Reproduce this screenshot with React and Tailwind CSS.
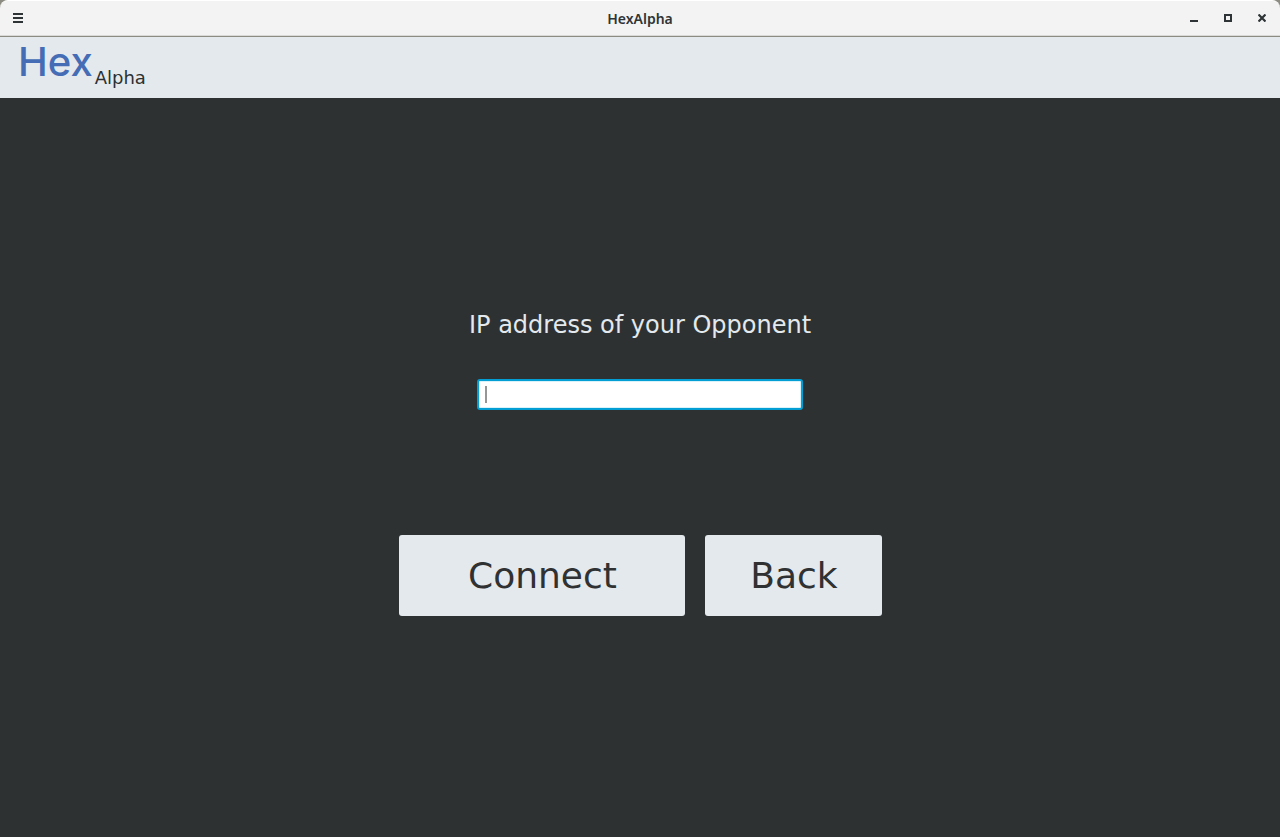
import React from "react";

function TitleBar() {
  return (
    <div className="bg-[#8d8c82]">
      <header className="grid h-9 grid-cols-[1fr_auto_1fr] items-center rounded-t-lg border-t border-b border-t-white border-b-[#d9d9d7] bg-[#f3f3f3] px-2 text-[#2e3436]">
        <button type="button" aria-label="Menu" className="flex size-5 items-center justify-center">
          <svg width="10" height="10" viewBox="0 0 10 10" fill="currentColor" shapeRendering="crispEdges">
            <path d="M0 0h10v2H0zM0 4h10v2H0zM0 8h10v2H0z" />
          </svg>
        </button>
        <h1 className="pt-0.5 font-['Noto_Sans','Open_Sans',sans-serif] text-sm font-semibold">HexAlpha</h1>
        <div className="flex justify-end gap-[14px]">
          <button type="button" aria-label="Minimize" className="flex size-5 items-center justify-center">
            <svg width="8" height="8" viewBox="0 0 8 8" fill="currentColor" shapeRendering="crispEdges">
              <path d="M0 6h8v2H0z" />
            </svg>
          </button>
          <button type="button" aria-label="Maximize" className="flex size-5 items-center justify-center">
            <svg width="8" height="8" viewBox="0 0 8 8" fill="currentColor" fillRule="evenodd" shapeRendering="crispEdges">
              <path d="M0 0h8v8H0zM2 2v4h4V2z" />
            </svg>
          </button>
          <button type="button" aria-label="Close" className="flex size-5 items-center justify-center">
            <svg width="8" height="8" viewBox="0 0 8 8" fill="none" stroke="currentColor" strokeWidth="2.2">
              <path d="M.5.5l7 7M7.5.5l-7 7" />
            </svg>
          </button>
        </div>
      </header>
      <div className="h-px bg-[#8d8c82]" />
    </div>
  );
}

function Logo() {
  return (
    <div className="flex h-[61px] items-start gap-0.5 bg-[#e4e9ed] px-[18px]">
      <span className="font-[Inter,sans-serif] text-[40px] leading-[50px] font-medium text-[#446db6]">Hex</span>
      <span className="pt-[29px] text-lg leading-6 text-[#2d3132]">Alpha</span>
    </div>
  );
}

export default function App() {
  return (
    <div className="flex min-h-screen flex-col bg-[#2d3132] font-['DejaVu_Sans',sans-serif]">
      <TitleBar />
      <Logo />
      <main className="flex flex-1 flex-col items-center justify-center pb-[10px]">
        <label htmlFor="address" className="text-2xl leading-8 text-[#e4e9ed]">
          IP address of your Opponent
        </label>
        <div className="relative mt-[38px] w-[326px] max-w-full">
          <input
            id="address"
            type="text"
            className="block h-[31px] w-full rounded-[3px] border-2 border-[#039ed3] bg-white px-2 text-base caret-transparent shadow-[inset_0_0_0_1px_#d9f1f9] outline-none"
          />
          <span aria-hidden="true" className="pointer-events-none absolute top-[7px] left-2 h-[17px] w-0.5 bg-[#969696]" />
        </div>
        <div className="mt-[125px] flex gap-5 text-4xl text-[#2f3132]">
          <button type="button" className="h-[81px] w-[286px] rounded-[3px] bg-[#e4e9ed] pl-0.5">Connect</button>
          <button type="button" className="h-[81px] w-[177px] rounded-[3px] bg-[#e4e9ed] pl-0.5">Back</button>
        </div>
      </main>
    </div>
  );
}
